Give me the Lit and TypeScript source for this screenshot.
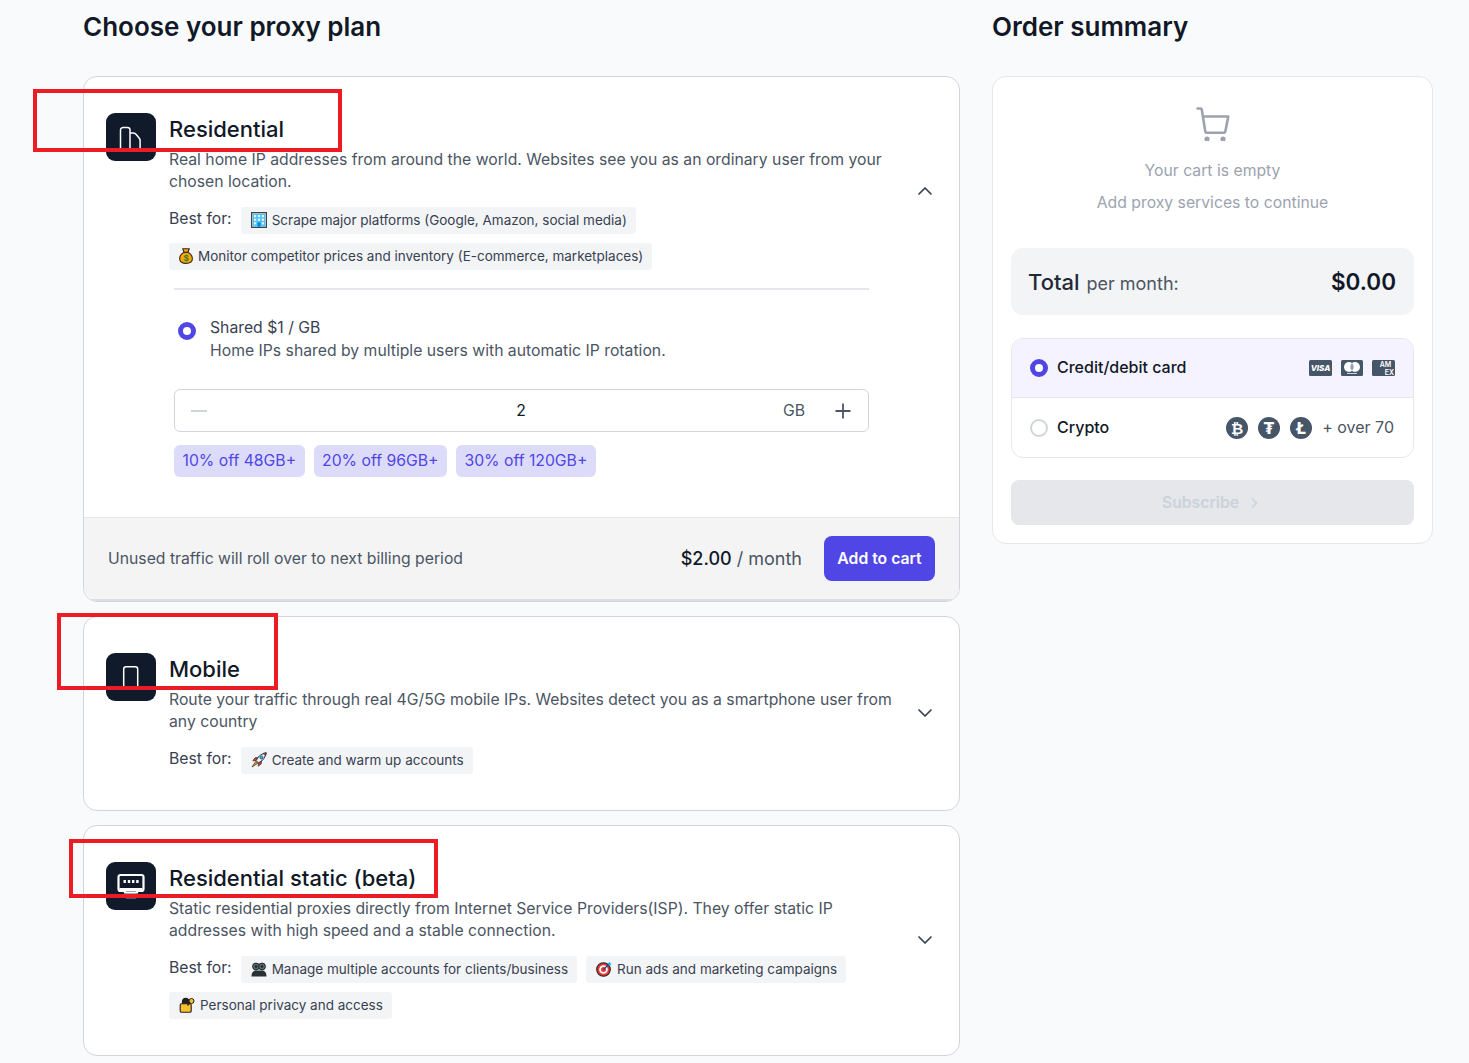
import { LitElement, html, css } from "lit";
import { customElement } from "lit/decorators.js";

const office = html`<svg class="emo" width="16" height="16" viewBox="0 0 16 16"><rect x=".6" y=".6" width="14.8" height="14.8" fill="#cfd8dc" stroke="#37474f" stroke-width="1.2"/><rect x="2" y="2" width="12" height="12.5" fill="#4fc3f7"/><g fill="#e1f5fe"><rect x="3" y="3" width="2.2" height="2.2"/><rect x="6.9" y="3" width="2.2" height="2.2"/><rect x="10.8" y="3" width="2.2" height="2.2"/><rect x="3" y="6.6" width="2.2" height="2.2"/><rect x="6.9" y="6.6" width="2.2" height="2.2"/><rect x="10.8" y="6.6" width="2.2" height="2.2"/><rect x="3" y="10.2" width="2.2" height="2.2"/><rect x="10.8" y="10.2" width="2.2" height="2.2"/></g><rect x="6.6" y="10.4" width="2.8" height="4.4" fill="#0288d1"/></svg>`;
const bag = html`<svg class="emo" width="14" height="16" viewBox="0 0 14 16"><path d="M3.800 .8h6.400L9 4.200c2.800 1.600 4.400 4 4.400 6.300 0 3.300-2.800 4.900-6.400 4.900S.6 13.800.6 10.500c0-2.300 1.600-4.700 4.400-6.300z" fill="#f5a800" stroke="#3e2723" stroke-width="1.100"/><path d="M4.800 4.300h4.400" stroke="#3e2723" stroke-width="1.200"/><text x="7" y="13" text-anchor="middle" font-size="8" font-weight="700" font-family="Inter,sans-serif" fill="#2e7d32">$</text></svg>`;
const rocket = html`<svg class="emo" width="16" height="16" viewBox="0 0 16 16"><path d="M5 8.500C7 4 11 1.500 15.200.8 14.500 5 12 9 7.500 11z" fill="#e3f2fd" stroke="#263238" stroke-width="1"/><path d="M12 1.500c1 .4 2 1.400 2.500 2.500l.7-3.200z" fill="#e53935" stroke="#263238" stroke-width=".7"/><circle cx="10.500" cy="5.500" r="1.500" fill="#29b6f6" stroke="#263238" stroke-width=".7"/><path d="M5 8.500 1.800 8.800 4 5.800 7 5.500zM7.500 11l-.3 3.200 3-2.200.3-3z" fill="#e53935" stroke="#263238" stroke-width=".7"/><path d="M4.800 9.300 1 15l5.800-3.800z" fill="#ff9800" stroke="#263238" stroke-width=".7"/></svg>`;
const people = html`<svg class="emo" width="16" height="16" viewBox="0 0 16 16"><circle cx="5" cy="5.500" r="3.400" fill="#546e7a" stroke="#212121"/><circle cx="11" cy="5.500" r="3.400" fill="#546e7a" stroke="#212121"/><circle cx="5" cy="5.500" r="1.300" fill="#212121"/><circle cx="11" cy="5.500" r="1.300" fill="#212121"/><path d="M.5 15.500c0-3.500 1.500-6 4.500-6h6c3 0 4.500 2.500 4.500 6z" fill="#263238"/></svg>`;
const target = html`<svg class="emo" width="16" height="16" viewBox="0 0 16 16"><circle cx="7.500" cy="8.500" r="6.800" fill="#e53935" stroke="#212121" stroke-width="1.100"/><circle cx="7.500" cy="8.500" r="4.300" fill="#fff"/><circle cx="7.500" cy="8.500" r="2.500" fill="#e53935"/><path d="M7.500 8.500 13.500 2.500" stroke="#0d47a1" stroke-width="1.100"/><path d="M11.500 2.500 14 .8l.4 1.600 1.400.4-2 2.200z" fill="#29b6f6"/></svg>`;
const lock = html`<svg class="emo" width="16" height="16" viewBox="0 0 16 16"><path d="M3.500 7V4.500a3.200 3.200 0 0 1 6.400 0V7" fill="#212121" stroke="#212121" stroke-width="1.200"/><rect x="1.200" y="6.800" width="11" height="8.400" rx="1.300" fill="#fbc02d" stroke="#212121" stroke-width="1.100"/><circle cx="12.500" cy="4" r="2.500" fill="#fbc02d" stroke="#212121"/><path d="M11 5.500 8.500 8.500" stroke="#212121" stroke-width="1.300"/></svg>`;

const chevUp = html`<svg width="24" height="24" viewBox="0 0 24 24" fill="none" stroke="#374151" stroke-width="1.700" stroke-linecap="round" stroke-linejoin="round"><path d="M6 15l6-6 6 6"/></svg>`;
const chevDown = html`<svg width="24" height="24" viewBox="0 0 24 24" fill="none" stroke="#374151" stroke-width="1.700" stroke-linecap="round" stroke-linejoin="round"><path d="M6 9l6 6 6-6"/></svg>`;

const buildingIcon = html`<svg width="24" height="24" viewBox="0 0 24 24" fill="none" stroke="#fff" stroke-width="1.500" stroke-linejoin="round"><path d="M1.500 24V5A2.500 2.500 0 0 1 4 2.500h4.500A2.500 2.500 0 0 1 11 5v19"/><path d="M11 8h3.500c1 0 1.900.5 2.500 1.300l3.300 4c.5.7.8 1.400.8 2.300V24"/></svg>`;
const phoneIcon = html`<svg width="24" height="24" viewBox="0 0 24 24" fill="none" stroke="#fff" stroke-width="1.500"><rect x="4.700" y="1.700" width="14" height="24" rx="2.500"/></svg>`;
const portIcon = html`<svg width="30" height="30" viewBox="0 0 30 30"><rect x="10" y="20" width="10" height="8" fill="#4b5563"/><path d="M2.500 6a2 2 0 0 1 2-2h21a2 2 0 0 1 2 2v12a2 2 0 0 1-2 2h-4.500v1.500H9V20H4.500a2 2 0 0 1-2-2z" fill="#111a2b" stroke="#fff" stroke-width="2.200"/><rect x="3.500" y="17" width="23" height="3.200" fill="#fff"/><g fill="#fff"><rect x="7.500" y="9" width="2.400" height="3"/><rect x="11.800" y="9" width="2.400" height="3"/><rect x="16" y="9" width="2.400" height="3"/><rect x="20.200" y="9" width="2.400" height="3"/></g></svg>`;

const cartIcon = html`<svg width="34" height="34" viewBox="0 0 34 34" fill="none"><path d="M1.500 1.500h3c.7 0 1.200.5 1.300 1.100L9.300 24.600c.1.700.6 1.100 1.300 1.100h17.400c.7 0 1.200-.5 1.300-1.100L32.300 9.500H7" stroke="#9ca3af" stroke-width="2.600" stroke-linecap="round" stroke-linejoin="round"/><circle cx="11" cy="32" r="2.600" fill="#9ca3af"/><circle cx="27" cy="32" r="2.600" fill="#9ca3af"/></svg>`;

const visa = html`<svg width="23" height="16" viewBox="0 0 23 16"><rect width="23" height="16" rx="1.500" fill="#475569"/><text x="11.500" y="11" text-anchor="middle" font-size="8" font-weight="800" font-style="italic" font-family="Inter,sans-serif" fill="#fff">VISA</text></svg>`;
const mc = html`<svg width="22" height="16" viewBox="0 0 22 16"><rect width="22" height="16" rx="1.500" fill="#475569"/><circle cx="8" cy="7" r="5" fill="#fff"/><circle cx="14" cy="7" r="5" fill="#fff"/><path d="M11 3.200a5 5 0 0 1 0 7.600 5 5 0 0 1 0-7.600z" fill="#94a3b8"/><rect x="6" y="13" width="10" height="1" fill="#cbd5e1"/></svg>`;
const amex = html`<svg width="23" height="16" viewBox="0 0 23 16"><rect width="23" height="16" rx="1.500" fill="#475569"/><text x="13.500" y="7" text-anchor="middle" font-size="7" font-weight="600" font-family="Inter,sans-serif" fill="#fff">AM</text><text x="17.500" y="14.500" text-anchor="middle" font-size="7" font-weight="600" font-family="Inter,sans-serif" fill="#fff">EX</text></svg>`;
const coin = (g: string) => html`<svg width="22" height="22" viewBox="0 0 22 22"><circle cx="11" cy="11" r="11" fill="#475569"/><text x="11" y="16.500" text-anchor="middle" font-size="15" font-weight="700" font-family="DejaVu Sans,sans-serif" fill="#fff">${g}</text></svg>`;

@customElement("app-root")
export class AppRoot extends LitElement {
  static styles = css`
    :host { display: block; background: #f9fafb; font-family: Inter, "Noto Sans", sans-serif; color: #111827; position: relative; overflow: hidden; height: 1063px; }
    .page { display: grid; grid-template-columns: 877px 441px; column-gap: 32px; padding-left: 83px; }
    h2 { margin: 11px 0 33px; font-size: 26px; line-height: 32px; font-weight: 600; color: #111827; }
    .stack { display: flex; flex-direction: column; gap: 14px; }
    .card { background: #fff; border: 1px solid #d1d5db; border-radius: 14px; overflow: hidden; }
    .head { display: flex; align-items: center; padding: 36px 22px 36px; }
    .open .head { padding-bottom: 18px; }
    .main { display: flex; flex: 1; gap: 13px; align-items: flex-start; }
    .ico { width: 50px; height: 48px; flex: none; border-radius: 9px; background: #111a2b; display: flex; align-items: center; justify-content: center; }
    .txt { width: 728px; }
    .title { font-size: 22px; line-height: 32px; font-weight: 500; color: #111827; margin-bottom: 4px; }
    .desc { font-size: 15.750px; line-height: 22px; color: #4b5563; }
    .tags { display: flex; flex-wrap: wrap; gap: 9px; margin-top: 14px; align-items: flex-start; }
    .lbl { font-size: 15.750px; line-height: 22px; color: #374151; padding-top: 1px; }
    .chip { display: flex; align-items: center; gap: 5px; box-sizing: border-box; height: 27px; padding: 0 9px 1px 10px; background: #f3f4f6; border-radius: 3px; font-size: 13.500px; color: #374151; white-space: nowrap; }
    .emo { flex: none; }
    .chev { width: 24px; height: 24px; flex: none; margin-bottom: 2px; }
    .body { margin: 0 90px 40px 90px; }
    .rule { height: 2px; background: #e5e7eb; }
    .opt { display: flex; gap: 14px; margin-top: 26px; padding-left: 4px; }
    .radio { width: 18px; height: 18px; box-sizing: border-box; border-radius: 50%; border: 5.500px solid #4f46e5; background: #fff; flex: none; }
    .opt .radio { margin-top: 6px; }
    .opt-t { font-size: 15.750px; line-height: 23px; color: #374151; }
    .opt-d { font-size: 15.750px; line-height: 23px; color: #4b5563; }
    .step { display: grid; grid-template-columns: 1fr auto 1fr; align-items: center; height: 43px; box-sizing: border-box; margin-top: 27px; border: 1px solid #d1d5db; border-radius: 6px; padding: 0 17px 0 16px; font-size: 15.750px; }
    .minus { width: 16px; height: 2px; background: #d1d5db; }
    .num { color: #111827; }
    .right { display: flex; justify-content: flex-end; align-items: center; gap: 30px; }
    .unit { color: #4b5563; }
    .plus { width: 16px; height: 16px; }
    .disc { display: flex; gap: 9px; margin-top: 13px; }
    .d { height: 32px; line-height: 32px; padding: 0 8.500px; background: #dddbfa; color: #4f46e5; border-radius: 6px; font-size: 15.750px; }
    .foot { display: flex; align-items: center; height: 84px; box-sizing: border-box; padding: 0 24px; background: #f4f4f5; border-top: 1px solid #e5e7eb; border-bottom: 2px solid #dcdde3; font-size: 15.750px; color: #4b5563; }
    .foot .note { flex: 1; }
    .price { font-size: 18px; color: #4b5563; margin-right: 22px; }
    .price b { font-weight: 500; color: #111827; }
    .btn { width: 111px; height: 45px; border-radius: 8px; background: #4f46e5; color: #fff; border: 0; font: 600 15.750px Inter, sans-serif; }
    .side { background: #fff; border: 1px solid #e5e7eb; border-radius: 14px; padding: 30px 18px 18px; }
    .empty { display: flex; flex-direction: column; align-items: center; font-size: 15.750px; line-height: 24px; color: #9ca3af; }
    .empty p { margin: 8px 0 0; }
    .empty svg { margin-bottom: 10px; }
    .total { display: flex; align-items: center; justify-content: space-between; height: 67px; margin-top: 33px; padding: 0 18px 0 17px; background: #f3f4f6; border-radius: 12px; }
    .total .l { font-size: 22px; font-weight: 500; color: #1f2937; }
    .total .l span { font-size: 18px; font-weight: 400; color: #4b5563; margin-left: 1px; }
    .total .v { font-size: 22.500px; font-weight: 600; color: #111827; }
    .pay { margin-top: 23px; border: 1px solid #e5e7eb; border-radius: 12px; overflow: hidden; }
    .row { display: flex; align-items: center; box-sizing: border-box; height: 59px; padding: 0 19px 0 18px; gap: 9px; font-size: 16px; font-weight: 500; color: #111827; }
    .row.sel { background: #f5f3ff; border-bottom: 1px solid #e5e7eb; padding-right: 18px; }
    .row .sp { flex: 1; }
    .nm { margin-bottom: 2px; }
    .off { width: 18px; height: 18px; box-sizing: border-box; border-radius: 50%; border: 2px solid #d1d5db; background: #fff; }
    .logos { display: flex; align-items: center; gap: 9px; }
    .logos.c { gap: 10px; }
    .over { font-size: 16px; font-weight: 400; color: #4b5563; margin-bottom: 2px; }
    .sub { display: flex; align-items: center; justify-content: center; gap: 10px; height: 45px; margin-top: 22px; background: #e5e7eb; border-radius: 8px; color: #cbd2d9; font-size: 15.750px; font-weight: 600; }
    .mark { position: absolute; box-sizing: border-box; border: 4px solid #ed1c24; pointer-events: none; }
    .m1 { left: 33px; top: 89px; width: 309px; height: 63px; }
    .m2 { left: 57px; top: 613px; width: 221px; height: 77px; }
    .m3 { left: 69px; top: 839px; width: 369px; height: 59px; }
  `;

  render() {
    return html`
      <div class="page">
        <div>
          <h2>Choose your proxy plan</h2>
          <div class="stack">
            <section class="card open">
              <div class="head">
                <div class="main">
                  <div class="ico">${buildingIcon}</div>
                  <div class="txt">
                    <div class="title">Residential</div>
                    <div class="desc">Real home IP addresses from around the world. Websites see you as an ordinary user from your chosen location.</div>
                    <div class="tags">
                      <span class="lbl">Best for:</span>
                      <span class="chip">${office}Scrape major platforms (Google, Amazon, social media)</span>
                      <span class="chip">${bag}Monitor competitor prices and inventory (E-commerce, marketplaces)</span>
                    </div>
                  </div>
                </div>
                <span class="chev">${chevUp}</span>
              </div>
              <div class="body">
                <div class="rule"></div>
                <div class="opt">
                  <span class="radio"></span>
                  <div>
                    <div class="opt-t">Shared $1 / GB</div>
                    <div class="opt-d">Home IPs shared by multiple users with automatic IP rotation.</div>
                  </div>
                </div>
                <div class="step">
                  <span class="minus"></span>
                  <span class="num">2</span>
                  <span class="right">
                    <span class="unit">GB</span>
                    <svg class="plus" viewBox="0 0 16 16" stroke="#4b5563" stroke-width="1.800"><path d="M8 .5v15M.5 8h15"/></svg>
                  </span>
                </div>
                <div class="disc">
                  <span class="d">10% off 48GB+</span>
                  <span class="d">20% off 96GB+</span>
                  <span class="d">30% off 120GB+</span>
                </div>
              </div>
              <div class="foot">
                <span class="note">Unused traffic will roll over to next billing period</span>
                <span class="price"><b>$2.00</b> / month</span>
                <button class="btn">Add to cart</button>
              </div>
            </section>

            <section class="card">
              <div class="head">
                <div class="main">
                  <div class="ico">${phoneIcon}</div>
                  <div class="txt">
                    <div class="title">Mobile</div>
                    <div class="desc">Route your traffic through real 4G/5G mobile IPs. Websites detect you as a smartphone user from any country</div>
                    <div class="tags">
                      <span class="lbl">Best for:</span>
                      <span class="chip">${rocket}Create and warm up accounts</span>
                    </div>
                  </div>
                </div>
                <span class="chev">${chevDown}</span>
              </div>
            </section>

            <section class="card">
              <div class="head">
                <div class="main">
                  <div class="ico">${portIcon}</div>
                  <div class="txt">
                    <div class="title">Residential static (beta)</div>
                    <div class="desc">Static residential proxies directly from Internet Service Providers(ISP). They offer static IP addresses with high speed and a stable connection.</div>
                    <div class="tags">
                      <span class="lbl">Best for:</span>
                      <span class="chip">${people}Manage multiple accounts for clients/business</span>
                      <span class="chip">${target}Run ads and marketing campaigns</span>
                      <span class="chip">${lock}Personal privacy and access</span>
                    </div>
                  </div>
                </div>
                <span class="chev">${chevDown}</span>
              </div>
            </section>
          </div>
        </div>

        <div>
          <h2>Order summary</h2>
          <aside class="side">
            <div class="empty">
              ${cartIcon}
              <p>Your cart is empty</p>
              <p>Add proxy services to continue</p>
            </div>
            <div class="total">
              <span class="l">Total <span>per month:</span></span>
              <span class="v">$0.00</span>
            </div>
            <div class="pay">
              <div class="row sel">
                <span class="radio"></span>
                <span class="nm">Credit/debit card</span>
                <span class="sp"></span>
                <span class="logos">${visa}${mc}${amex}</span>
              </div>
              <div class="row">
                <span class="off"></span>
                <span class="nm">Crypto</span>
                <span class="sp"></span>
                <span class="logos c">${coin("₿")}${coin("₮")}${coin("Ł")}<span class="over">+ over 70</span></span>
              </div>
            </div>
            <div class="sub">Subscribe
              <svg width="14" height="12" viewBox="0 0 14 12" fill="none" stroke="#cbd2d9" stroke-width="1.500"><path d="M3 1.500 7.500 6 3 10.500"/></svg>
            </div>
          </aside>
        </div>
      </div>
      <div class="mark m1"></div>
      <div class="mark m2"></div>
      <div class="mark m3"></div>
    `;
  }
}
